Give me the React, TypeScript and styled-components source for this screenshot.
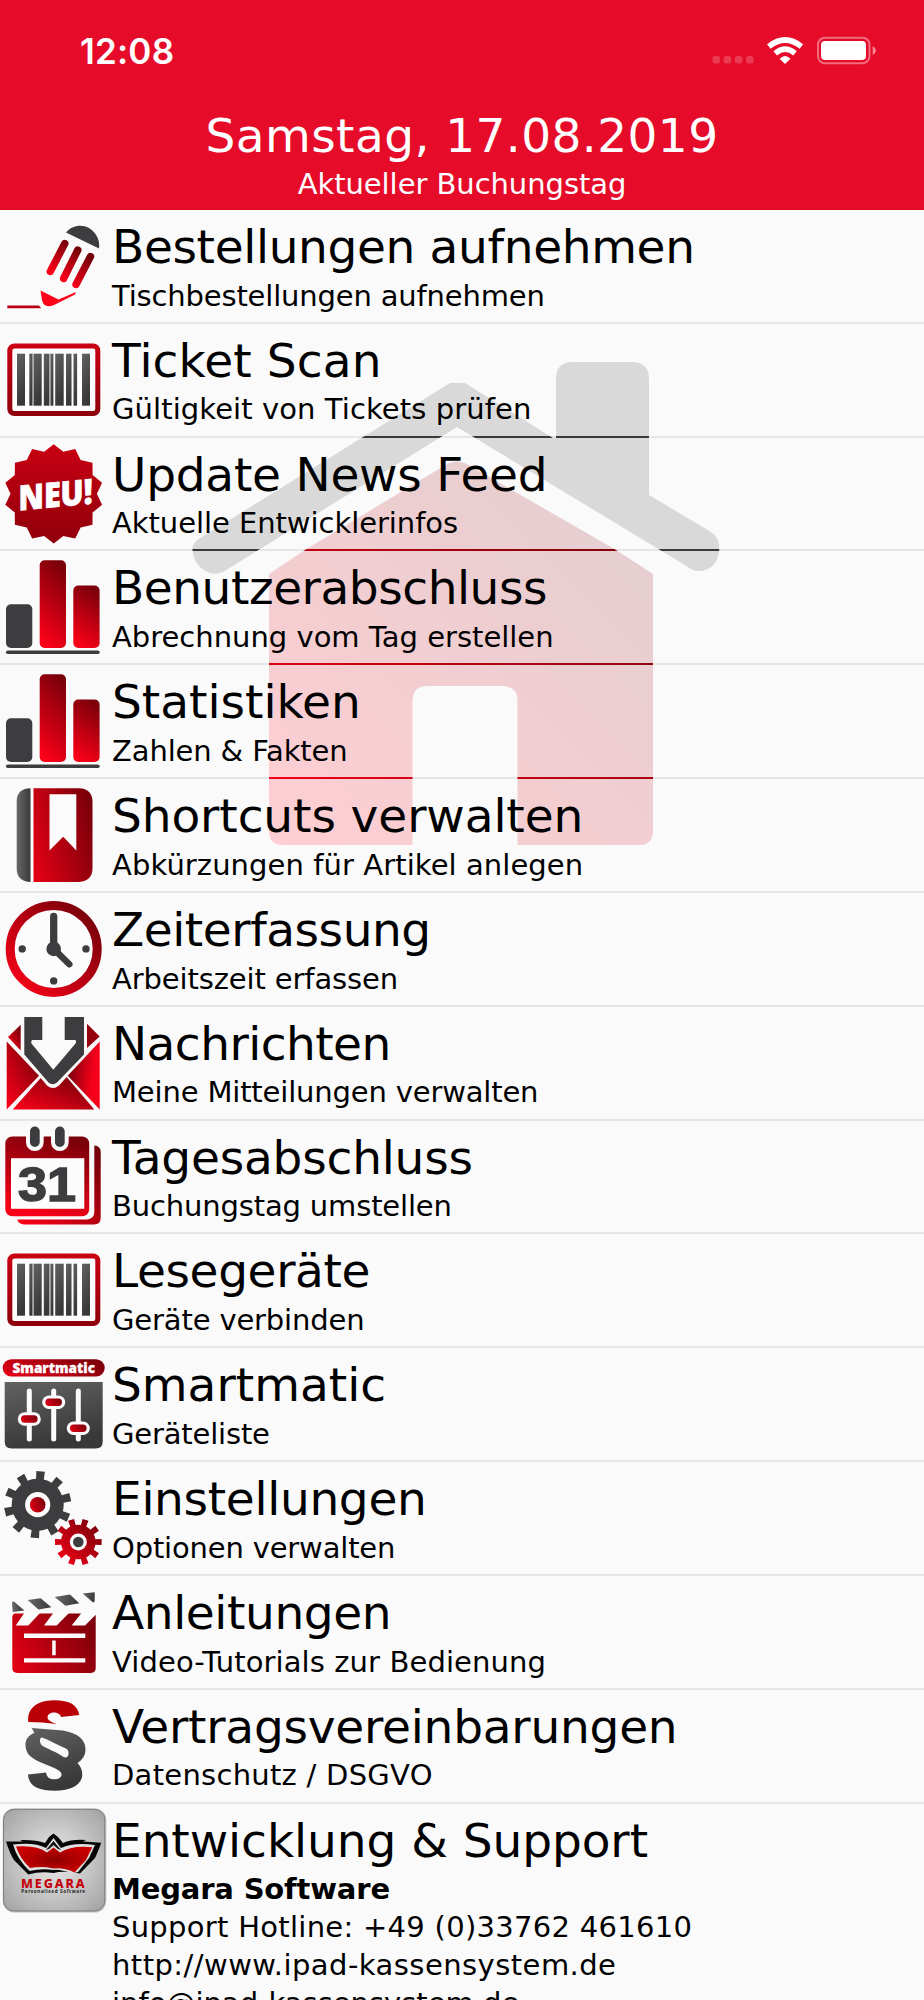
import React, { ReactNode } from 'react'
import styled, { createGlobalStyle } from 'styled-components'

const GlobalStyle = createGlobalStyle`
  body {
    margin: 0;
    background: #fafafa;
    font-family: Verdana, 'DejaVu Sans', sans-serif;
  }
`

const Screen = styled.div`
  width: 924px;
  height: 2000px;
  overflow: hidden;
  display: flex;
  flex-direction: column;
`

const Header = styled.header`
  flex: none;
  height: 210px;
  background: #e60b29;
  color: #fff;
`

const StatusBar = styled.div`
  box-sizing: border-box;
  height: 102px;
  padding: 0 48px 0 80px;
  display: flex;
  align-items: center;
  justify-content: space-between;
`

const Time = styled.span`
  font: 600 35px/40px Inter, sans-serif;
  letter-spacing: 0.2px;
`

const DateTitle = styled.h1`
  margin: 6px 0 0;
  font-size: 47px;
  font-weight: 400;
  line-height: 56px;
  letter-spacing: 0.42px;
  text-align: center;
`

const DateCaption = styled.p`
  margin: 0;
  font-size: 29px;
  line-height: 40px;
  letter-spacing: -0.05px;
  text-align: center;
`

/* The separators are gaps between translucent rows, so the house behind
   the list shines through them at full strength. */
const List = styled.main`
  position: relative;
  flex: none;
  display: flex;
  flex-direction: column;
  gap: 2px;
  background: #e6e6e6;
`

const Watermark = styled.svg`
  position: absolute;
  left: 190px;
  top: 150px;
`

const Row = styled.section<{ $last?: boolean }>`
  position: relative;
  box-sizing: border-box;
  height: ${(p) => (p.$last ? '240px' : '111.83px')};
  background: rgba(254, 254, 254, 0.81);
  display: flex;
`

const Icon = styled.svg`
  flex: none;
  width: 112px;
  height: 112px;
  overflow: visible;
`

const Texts = styled.div`
  padding-top: 8px;
  white-space: nowrap;
`

const Title = styled.h2<{ $tracking?: number }>`
  margin: 0;
  font-size: 47px;
  font-weight: 400;
  line-height: 58.6px;
  letter-spacing: ${(p) => p.$tracking || 0}px;
`

const Line = styled.p<{ $bold?: boolean; $tracking?: number }>`
  margin: 0;
  font-size: 29px;
  font-weight: ${(p) => (p.$bold ? 700 : 400)};
  line-height: 38px;
  letter-spacing: ${(p) => p.$tracking || 0}px;
`

const GREY = '#3d3d3f'

const Gradients = () => (
  <svg width="0" height="0" style={{ position: 'absolute' }}>
    <defs>
      <linearGradient id="red" x1="0" y1="1" x2="1" y2="0">
        <stop offset="0" stopColor="#ff0019" />
        <stop offset="1" stopColor="#6b0009" />
      </linearGradient>
      <linearGradient id="redTall" x1="0.35" y1="1" x2="0.65" y2="0">
        <stop offset="0" stopColor="#fb0018" />
        <stop offset="1" stopColor="#7a000a" />
      </linearGradient>
      <linearGradient id="redFlip" x1="1" y1="0.5" x2="0" y2="0.2">
        <stop offset="0.2" stopColor="#f5001a" />
        <stop offset="1" stopColor="#6b0009" />
      </linearGradient>
      <linearGradient id="redDown" x1="0" y1="0" x2="0" y2="1">
        <stop offset="0" stopColor="#c90012" />
        <stop offset="1" stopColor="#8f000b" />
      </linearGradient>
      <linearGradient id="redSide" x1="0" y1="0.7" x2="1" y2="0.3">
        <stop offset="0" stopColor="#df0014" />
        <stop offset="1" stopColor="#7c000a" />
      </linearGradient>
      <linearGradient
        id="pencil"
        gradientUnits="userSpaceOnUse"
        x1="82"
        y1="42"
        x2="62"
        y2="70"
      >
        <stop offset="0" stopColor="#74000a" />
        <stop offset="1" stopColor="#ff0019" />
      </linearGradient>
      <linearGradient id="greyDown" x1="0" y1="0" x2="0.3" y2="1">
        <stop offset="0" stopColor="#626262" />
        <stop offset="1" stopColor="#383838" />
      </linearGradient>
      <linearGradient id="greySide">
        <stop offset="0" stopColor="#686868" />
        <stop offset="1" stopColor="#383838" />
      </linearGradient>
      <radialGradient id="tile" cy="0.5" r="0.65">
        <stop offset="0" stopColor="#ececec" />
        <stop offset="1" stopColor="#a6a6a6" />
      </radialGradient>
      <radialGradient id="book">
        <stop offset="0" stopColor="#8e0000" />
        <stop offset="1" stopColor="#c80000" />
      </radialGradient>
    </defs>
  </svg>
)

const House = () => (
  <Watermark width="540" height="500" viewBox="190 360 540 500">
    <path
      fill="#3a3a3a"
      d="M450 383H465L553 438H556V379Q556 362 573 362H632Q649 362 649 379V495L711 532Q721 539 719 552Q716 571 698 571Q693 571 688 567L457 427L223 572Q216 575 210 573Q194 567 192.500 550Q192 542 202 537Z"
    />
    <path
      fill="url(#red)"
      d="M447 464Q457 459 467 464L616 550L653 574V831Q653 845 639 845H517.500V701Q517.500 686 502 686H428Q412.500 686 412.500 701V845H283Q269 845 269 831V574L305 550Z"
    />
  </Watermark>
)

const PencilIcon = () => (
  <Icon viewBox="0 0 112 112">
    <path fill={GREY} d="M66 22.500C72 15 82 14 89 18C97 23 100 31 99 38.500Z" />
    <g stroke="url(#pencil)" strokeWidth="7.400" strokeLinecap="round">
      <path d="M64.800 33.500L50.300 61.500" />
      <path d="M77.800 40L63.600 68.500" />
      <path d="M90.500 46.500L76 74.500" />
    </g>
    <path
      fill="url(#pencil)"
      d="M40.500 80.500L58.500 89.500L76 82L75 84.500L54 95Q44 99 42 90Z"
    />
    <path fill="#b8000f" d="M7.300 95.500H39L41.200 98.300H7.300Z" />
  </Icon>
)

const BARS = [
  [17, 8],
  [29.3, 3],
  [33.7, 8],
  [43.8, 5.2],
  [50.8, 2.6],
  [55.2, 8.5],
  [66, 5.5],
  [73.5, 3.6],
  [82, 8],
]

const BarcodeIcon = () => (
  <Icon viewBox="0 0 112 112">
    <rect
      x="9.800"
      y="22"
      width="88"
      height="67.500"
      rx="4.500"
      fill="#fdfdfd"
      stroke="url(#redDown)"
      strokeWidth="5"
    />
    <rect x="49" y="29.700" width="2" height="52" fill="#aaa" />
    <rect x="31.800" y="29.700" width="2" height="52" fill="#bbb" />
    {BARS.map(([x, w]) => (
      <rect key={x} x={x} y="29.700" width={w} height="52" fill="url(#greyDown)" />
    ))}
  </Icon>
)

const star = Array.from({ length: 28 }, (_, i) => {
  const a = (i * Math.PI) / 14
  const r = i % 2 ? 43.2 : 49.6
  return `${53.7 + r * Math.sin(a)},${55.8 - r * Math.cos(a)}`
}).join(' ')

const NewIcon = () => (
  <Icon viewBox="0 0 112 112">
    <polygon points={star} fill="url(#redDown)" />
    <text
      transform="translate(18.500 72.500) skewY(-5.500)"
      fontFamily="Open Sans, sans-serif"
      fontWeight="800"
      fontSize="34.500"
      textLength="74"
      lengthAdjust="spacingAndGlyphs"
      fill="#fff"
      stroke="#fff"
      strokeWidth="0.800"
    >
      NEU!
    </text>
  </Icon>
)

const ChartIcon = () => (
  <Icon viewBox="0 0 112 112">
    <rect x="6" y="53.300" width="26.300" height="43.700" rx="5" fill={GREY} />
    <rect x="39.700" y="9.300" width="26.300" height="87.700" rx="5" fill="url(#redTall)" />
    <rect x="73.300" y="34.600" width="26.300" height="62.400" rx="5" fill="url(#redTall)" />
    <rect x="6" y="99.400" width="93.700" height="3.700" rx="1.800" fill={GREY} />
  </Icon>
)

const BookIcon = () => (
  <Icon viewBox="0 0 112 112">
    <path fill="url(#greySide)" d="M30.500 9.300V103C22 103 16.700 98 16.700 90V22C16.700 14 22 9.300 30.500 9.300Z" />
    <path fill="url(#redSide)" d="M33.500 9.300H79Q92.500 10 92.500 23V89Q92.500 102 79 103H33.500Z" />
    <path fill="#fcfcfc" d="M49.500 15.300H76.300V71.500L63.200 57.700L49.500 71.500Z" />
  </Icon>
)

const ClockIcon = () => (
  <Icon viewBox="0 0 112 112">
    <circle cx="53.700" cy="55.900" r="43.500" fill="#fcfcfc" stroke="url(#red)" strokeWidth="9" />
    <g stroke={GREY} strokeLinecap="round">
      <path strokeWidth="7.300" d="M53.700 55.900V23.500" />
      <path strokeWidth="6.500" d="M53.700 55.900L69.300 71.300" />
    </g>
    <circle cx="53.700" cy="55.900" r="7.300" fill={GREY} />
    <circle cx="22.200" cy="55.900" r="3.700" fill={GREY} />
    <circle cx="86" cy="55.900" r="3.700" fill={GREY} />
    <circle cx="53.700" cy="87.900" r="3.700" fill={GREY} />
  </Icon>
)

const MailIcon = () => (
  <Icon viewBox="0 0 112 112">
    <path fill="url(#red)" d="M8 30L20.700 17.700V43.400Z" />
    <path fill="#96000c" d="M99.700 29.400L87 16.700V41Z" />
    <path fill="url(#red)" d="M6.700 34.400L39 68.700L6.700 102.400Z" />
    <path fill="url(#redFlip)" d="M99.700 34.400L67.700 68.700L99.700 102.400Z" />
    <path
      fill="url(#red)"
      d="M12.700 102.400L40.700 71L47 78.500Q53 83.500 59 78.500L66.700 70L94.300 102.400Z"
    />
    <path
      fill={GREY}
      d="M24.300 10H42.300V33H32.500Q30.500 34 31.500 36.500L53.300 62.700L75.500 36.500Q77 34 75 33H64.700V10H84V47.400L57 75.500Q52.700 79 48.500 75.500L24.300 47.400Z"
    />
  </Icon>
)

const CalendarIcon = () => (
  <Icon viewBox="0 0 112 112">
    <path
      fill="url(#red)"
      d="M94.300 24.500Q100.700 25 100.700 31V96.500Q100.700 103.500 94 103.500H24Q18.500 103 17.300 98.500H87Q94.300 98 94.300 91Z"
    />
    <rect x="5.300" y="15.500" width="83.900" height="79.700" rx="7" fill="url(#redTall)" />
    <rect x="11" y="37.200" width="73.300" height="50.600" fill="#fcfcfc" />
    <g fill={GREY} stroke="#fbfbfb" strokeWidth="8" paintOrder="stroke">
      <rect x="30" y="5.500" width="9.700" height="20.500" rx="4.800" />
      <rect x="55" y="5.500" width="9.700" height="20.500" rx="4.800" />
    </g>
    <text
      x="18"
      y="80"
      fontFamily="Liberation Sans, sans-serif"
      fontWeight="700"
      fontSize="49"
      textLength="58"
      lengthAdjust="spacingAndGlyphs"
      fill={GREY}
      stroke={GREY}
      strokeWidth="1.500"
    >
      31
    </text>
  </Icon>
)

const SLIDERS = [
  [29.3, 71],
  [53.7, 54.3],
  [78.3, 80.3],
]

const SmartmaticIcon = () => (
  <Icon viewBox="0 0 112 112">
    <rect x="2.700" y="11.200" width="102" height="17.300" rx="8.600" fill="url(#redSide)" />
    <text
      x="12.500"
      y="25"
      fontFamily="Noto Sans, sans-serif"
      fontWeight="900"
      fontSize="14.500"
      textLength="82.500"
      lengthAdjust="spacingAndGlyphs"
      fill="#fff"
      stroke="#fff"
      strokeWidth="0.300"
    >
      Smartmatic
    </text>
    <path
      fill="url(#greyDown)"
      d="M4.700 34H102.700V93.500Q102.700 100.500 95.700 100.500H11.700Q4.700 100.500 4.700 93.500Z"
    />
    {SLIDERS.map(([x, y]) => (
      <g key={x}>
        <rect x={x - 2.5} y="40.500" width="5" height="53" rx="2.500" fill="#fcfcfc" />
        <rect x={x - 11.5} y={y - 6.8} width="23" height="13.600" rx="6.800" fill="#fcfcfc" />
        <rect x={x - 8.3} y={y - 3.7} width="16.600" height="7.400" rx="3.700" fill="url(#redSide)" />
      </g>
    ))}
  </Icon>
)

interface GearProps {
  cx: number
  cy: number
  r: number
  outer: number
  tooth: number
  offset: number
  fill: string
}

const Gear = ({ cx, cy, r, outer, tooth, offset, fill }: GearProps) => {
  // one outline, so that the gradient runs over the whole wheel
  const at = (radius: number, a: number) =>
    `${cx + radius * Math.sin(a)} ${cy - radius * Math.cos(a)}`
  const d = Array.from({ length: 10 }, (_, i) => {
    const a = ((offset + i * 36) * Math.PI) / 180
    const inner = Math.asin((tooth * 0.45) / r)
    const tip = Math.asin((tooth * 0.5) / outer)
    const next = a + Math.PI / 5 - inner
    return `${i ? 'L' : 'M'}${at(r, a - inner)}L${at(outer, a - tip)}L${at(
      outer,
      a + tip
    )}L${at(r, a + inner)}A${r} ${r} 0 0 1 ${at(r, next)}`
  }).join('')
  return <path d={`${d}Z`} fill={fill} />
}

const GearsIcon = () => (
  <Icon viewBox="0 0 112 112">
    <Gear cx={37.7} cy={42.7} r={26} outer={33.7} tooth={8.6} offset={5} fill={GREY} />
    <circle cx="37.700" cy="42.700" r="12.600" fill="#fcfcfc" />
    <circle cx="37.700" cy="42.700" r="7.800" fill="url(#redSide)" />
    <circle cx="78.300" cy="80" r="21" fill="#fcfcfc" />
    <Gear cx={78.3} cy={80} r={17.3} outer={23.5} tooth={6.2} offset={18} fill="url(#red)" />
    <circle cx="78.300" cy="80" r="8.500" fill="#fcfcfc" />
    <circle cx="78.300" cy="80" r="5.300" fill={GREY} />
  </Icon>
)

const ClapperIcon = () => (
  <Icon viewBox="0 0 112 112">
    <g fill="url(#greySide)">
      <path d="M12 26.500Q12.500 25 14 25.500L24.300 34.500L12.700 36Z" />
      <path d="M27.700 24L40.700 22.200L51.300 31.200L38.500 33.600Z" />
      <path d="M54.700 21L70 18.500L79.300 27.200L65.500 29.800Z" />
      <path d="M82.700 17.500L94.700 16.200V25.500L93 26.500Z" />
    </g>
    <path
      fill="url(#redSide)"
      d="M14 37.500H95.700V92Q95.700 96.900 90.700 96.900H17.300Q12.300 96.900 12.300 92V40Z"
    />
    <g fill="#fcfcfc">
      <path d="M24.300 37H40L28.300 49.500H15.700Z" />
      <path d="M53.300 37H69L56.700 49.500H44Z" />
      <path d="M81.500 37H96V38.500L85 49.500H71.700Z" />
      <path d="M24 57.500H85.300V61.900H24ZM24 82.200H85.300V86.500H24ZM52.200 64.500H55.700V79.200H52.200Z" />
    </g>
  </Icon>
)

const ParagraphIcon = () => (
  <Icon viewBox="0 0 112 112">
    <path
      fill="#b90005"
      d="M28.300 32C27 20 35 10.500 54 10.300C70 10.300 77.500 15 79.300 25L61 27C60 21.500 48 20.500 47.500 27.500C48 31 52 32 56.500 34Q42 32 28.300 32Z"
    />
    <path
      fill="url(#greyDown)"
      fillRule="evenodd"
      d="M31.700 37.900L63 40.500C78 43 85.500 50 85.500 59C85.500 67 81 70.500 77.500 73C81 77 83 81 82 87C80 96.500 68 100.700 55 100.700C38 100.700 28.500 96 28 84.400L46 82.500C47 88.500 51 89.700 56 89.300C62 88.500 63 84 59.500 81C52 75.500 36 72.500 29 65C23 57 24.500 46 34.500 43ZM42 47.500C39 48 39.500 53 42 55.500C47 59 57 62 63.500 67C67 68.500 69 66 68.500 62C68 59 66 58.500 62.500 57C55 54 49 49.500 42 47.500Z"
    />
  </Icon>
)

const MegaraIcon = () => (
  <Icon viewBox="0 0 112 112">
    <rect x="2.800" y="4.500" width="103.500" height="104" rx="11.500" fill="#777" opacity="0.450" />
    <rect
      x="3.500"
      y="5.300"
      width="101.300"
      height="101.700"
      rx="10.500"
      fill="url(#tile)"
      stroke="#7c7c7c"
    />
    <path
      fill="#050505"
      d="M6 37.500L23 37.500L20 36Q36 35.500 45 39L49 33L53.500 29.500L58 33L63 39Q72 35 86 36L83 37.500L101.300 38.700Q97 50 95 54L80 69.500Q64 66.500 53.500 69Q40 67 28.300 70.500L14 56Q10 50 6 37.500Z"
    />
    <path
      fill="#dedede"
      d="M13 40.500Q35 38 46 44L53.500 34L61 44Q74 38 95 41L89 54L78 68L72 69.500Q60 65 53.500 66Q42 64 29.500 67Q17 55 13 40.500Z"
    />
    <path fill="#111" d="M46 46L53.500 37L61 46L58 45L53.500 41L49 45Z" />
    <path
      fill="url(#book)"
      d="M16 42.600Q37 41 47 48.500L53.500 43.500L60 48.500Q72 41 92.300 43.300L86 56L74.500 68.500Q64 63.500 53.500 64.500Q42 62 30 64Q20 55 16 42.600Z"
    />
    <text
      x="21"
      y="83.700"
      fontFamily="Noto Sans, sans-serif"
      fontWeight="800"
      fontSize="12.500"
      textLength="63.500"
      lengthAdjust="spacing"
      fill="#c4000b"
    >
      MEGARA
    </text>
    <text
      x="21.300"
      y="88.500"
      fontFamily="Noto Sans, sans-serif"
      fontWeight="700"
      fontSize="4.600"
      textLength="63.700"
      lengthAdjust="spacing"
      fill="#222"
    >
      Personalised Software
    </text>
  </Icon>
)

const StatusIcons = () => (
  <svg width="164" height="30" viewBox="712 36 164 30">
    <g fill="#fff" fillOpacity="0.200">
      <rect x="712.500" y="56" width="7.500" height="7.500" rx="2.500" />
      <rect x="723.700" y="56" width="7.500" height="7.500" rx="2.500" />
      <rect x="734.900" y="56" width="7.500" height="7.500" rx="2.500" />
      <rect x="746.100" y="56" width="7.500" height="7.500" rx="2.500" />
    </g>
    <g fill="none" stroke="#fff" strokeWidth="5.600">
      <path d="M768.800 46.500Q785 33.500 801.400 46.500" />
      <path d="M775.300 53.400Q785 45 795 53.400" />
    </g>
    <path fill="#fff" d="M779.700 58.700Q785 53.500 790.500 58.700L785 64Z" />
    <rect
      x="818"
      y="37.700"
      width="51.500"
      height="25.600"
      rx="7"
      fill="none"
      stroke="#fff"
      strokeOpacity="0.400"
      strokeWidth="2"
    />
    <rect x="821" y="41" width="45" height="19" rx="4" fill="#fff" />
    <path fill="#fff" fillOpacity="0.500" d="M872.700 46Q876 48 876 50.500Q876 53 872.700 55Z" />
  </svg>
)

interface Item {
  icon: ReactNode
  title: string
  text: string
  // letter-spacing in px of the title and of the text
  tracking: [number, number]
}

const items: Item[] = [
  {
    icon: <PencilIcon />,
    title: 'Bestellungen aufnehmen',
    text: 'Tischbestellungen aufnehmen',
    tracking: [-0.35, -0.16],
  },
  {
    icon: <BarcodeIcon />,
    title: 'Ticket Scan',
    text: 'Gültigkeit von Tickets prüfen',
    tracking: [0.12, 0.09],
  },
  {
    icon: <NewIcon />,
    title: 'Update News Feed',
    text: 'Aktuelle Entwicklerinfos',
    tracking: [-0.24, -0.05],
  },
  {
    icon: <ChartIcon />,
    title: 'Benutzerabschluss',
    text: 'Abrechnung vom Tag erstellen',
    tracking: [-0.45, 0],
  },
  {
    icon: <ChartIcon />,
    title: 'Statistiken',
    text: 'Zahlen & Fakten',
    tracking: [0, -0.13],
  },
  {
    icon: <BookIcon />,
    title: 'Shortcuts verwalten',
    text: 'Abkürzungen für Artikel anlegen',
    tracking: [-0.1, 0.08],
  },
  {
    icon: <ClockIcon />,
    title: 'Zeiterfassung',
    text: 'Arbeitszeit erfassen',
    tracking: [-0.45, -0.12],
  },
  {
    icon: <MailIcon />,
    title: 'Nachrichten',
    text: 'Meine Mitteilungen verwalten',
    tracking: [-0.55, -0.16],
  },
  {
    icon: <CalendarIcon />,
    title: 'Tagesabschluss',
    text: 'Buchungstag umstellen',
    tracking: [-0.2, -0.15],
  },
  {
    icon: <BarcodeIcon />,
    title: 'Lesegeräte',
    text: 'Geräte verbinden',
    tracking: [-0.38, -0.15],
  },
  {
    icon: <SmartmaticIcon />,
    title: 'Smartmatic',
    text: 'Geräteliste',
    tracking: [0, -0.17],
  },
  {
    icon: <GearsIcon />,
    title: 'Einstellungen',
    text: 'Optionen verwalten',
    tracking: [-0.32, -0.17],
  },
  {
    icon: <ClapperIcon />,
    title: 'Anleitungen',
    text: 'Video-Tutorials zur Bedienung',
    tracking: [-0.4, 0.11],
  },
  {
    icon: <ParagraphIcon />,
    title: 'Vertragsvereinbarungen',
    text: 'Datenschutz / DSGVO',
    tracking: [-0.23, 0.27],
  },
]

const App = () => (
  <Screen>
    <GlobalStyle />
    <Gradients />
    <Header>
      <StatusBar>
        <Time>12:08</Time>
        <StatusIcons />
      </StatusBar>
      <DateTitle>Samstag, 17.08.2019</DateTitle>
      <DateCaption>Aktueller Buchungstag</DateCaption>
    </Header>
    <List>
      <House />
      {items.map(({ icon, title, text, tracking }) => (
        <Row key={title}>
          {icon}
          <Texts>
            <Title $tracking={tracking[0]}>{title}</Title>
            <Line $tracking={tracking[1]}>{text}</Line>
          </Texts>
        </Row>
      ))}
      <Row $last>
        <MegaraIcon />
        <Texts>
          <Title $tracking={-0.06}>Entwicklung &amp; Support</Title>
          <Line $bold $tracking={-0.17}>
            Megara Software
          </Line>
          <Line $tracking={0.29}>Support Hotline: +49 (0)33762 461610</Line>
          <Line $tracking={0.45}>http://www.ipad-kassensystem.de</Line>
          <Line>info@ipad-kassensystem.de</Line>
        </Texts>
      </Row>
    </List>
  </Screen>
)

export default App
